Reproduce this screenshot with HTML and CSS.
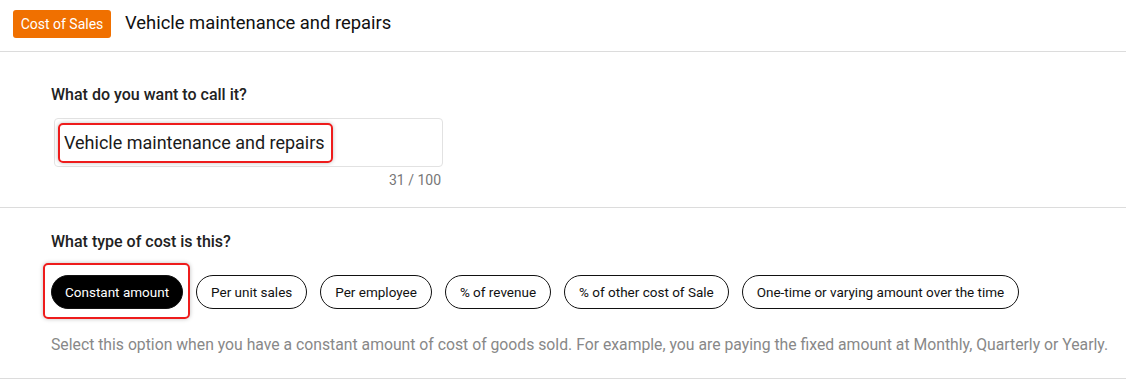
FILE: index.html
```html
<!DOCTYPE html>
<html lang="en">
<head>
    <meta charset="UTF-8">
    <title>Vehicle maintenance and repairs</title>
    <link rel="stylesheet" href="styles.css">
</head>
<body>
    <div class="header">
        <span class="badge">Cost of Sales</span>
        <h1 class="title">Vehicle maintenance and repairs</h1>
    </div>

    <div class="section section--name">
        <label class="section__label">What do you want to call it?</label>
        <div class="field">
            <div class="field__input">
                <span class="mark mark--text">Vehicle maintenance and repairs</span>
            </div>
            <div class="field__count">31 / 100</div>
        </div>
    </div>

    <div class="section section--type">
        <label class="section__label">What type of cost is this?</label>
        <div class="options">
            <button class="pill pill--active mark-box">Constant amount</button>
            <button class="pill">Per unit sales</button>
            <button class="pill">Per employee</button>
            <button class="pill">% of revenue</button>
            <button class="pill">% of other cost of Sale</button>
            <button class="pill">One-time or varying amount over the time</button>
        </div>
        <p class="hint">Select this option when you have a constant amount of cost of goods sold. For example, you are paying the fixed amount at Monthly, Quarterly or Yearly.</p>
    </div>
</body>
</html>
```

FILE: styles.css
```css
* {
  margin: 0;
  padding: 0;
  box-sizing: border-box;
}

body {
  font-family: 'Roboto', 'Liberation Sans', sans-serif;
  background-color: #ffffff;
  color: #1f1f1f;
}

.header {
  height: 52px;
  display: flex;
  align-items: flex-start;
  padding: 10px 0 0 13px;
  border-bottom: 1px solid #dcdcdc;
}

.badge {
  height: 28px;
  width: 98px;
  display: flex;
  align-items: center;
  justify-content: center;
  background-color: #f07000;
  color: #ffffff;
  font-size: 14px;
  border-radius: 3px;
}

.title {
  margin-left: 14px;
  font-size: 18.4px;
  font-weight: 400;
  line-height: 26px;
  color: #111111;
}

.section {
  padding-left: 51px;
  border-bottom: 1px solid #dcdcdc;
}

.section__label {
  display: block;
  font-size: 16px;
  line-height: 19px;
  font-weight: 500;
  color: #222222;
}

.section--name {
  height: 156px;
  padding-top: 33px;
}

.field {
  width: 389px;
  margin: 14px 0 0 3px;
}

.field__input {
  height: 49px;
  border: 1px solid #e2e2e2;
  border-radius: 4px;
  padding: 4px 0 0 3px;
}

.mark {
  display: inline-block;
  border: 2px solid #ee1c1c;
  border-radius: 5px;
  box-shadow: 0 0 4px rgba(0, 0, 0, 0.25);
}

.mark--text {
  height: 40px;
  padding: 0 6px 0 4px;
  font-size: 18px;
  line-height: 36px;
  color: #1a1a1a;
}

.field__count {
  text-align: right;
  font-size: 14px;
  line-height: 16px;
  color: #777777;
  margin-top: 5px;
  padding-right: 2px;
}

.section--type {
  height: 171px;
  padding-top: 24px;
}

.options {
  display: flex;
  gap: 13px;
  margin-top: 24px;
}

.pill {
  height: 34px;
  padding: 0 14px;
  border: 1px solid #111111;
  border-radius: 17px;
  background-color: #ffffff;
  color: #111111;
  font-family: inherit;
  font-size: 13.5px;
  white-space: nowrap;
  cursor: pointer;
}

.pill--active {
  padding: 0 13px;
  background-color: #000000;
  color: #ffffff;
}

.mark-box {
  position: relative;
}

.mark-box::after {
  content: '';
  position: absolute;
  top: -13px;
  bottom: -11px;
  left: -9px;
  right: -8px;
  border: 2px solid #ee1c1c;
  border-radius: 5px;
  box-shadow: 0 0 4px rgba(0, 0, 0, 0.25);
}

.hint {
  margin-top: 26px;
  font-size: 15.75px;
  line-height: 19px;
  color: #888888;
}
```
